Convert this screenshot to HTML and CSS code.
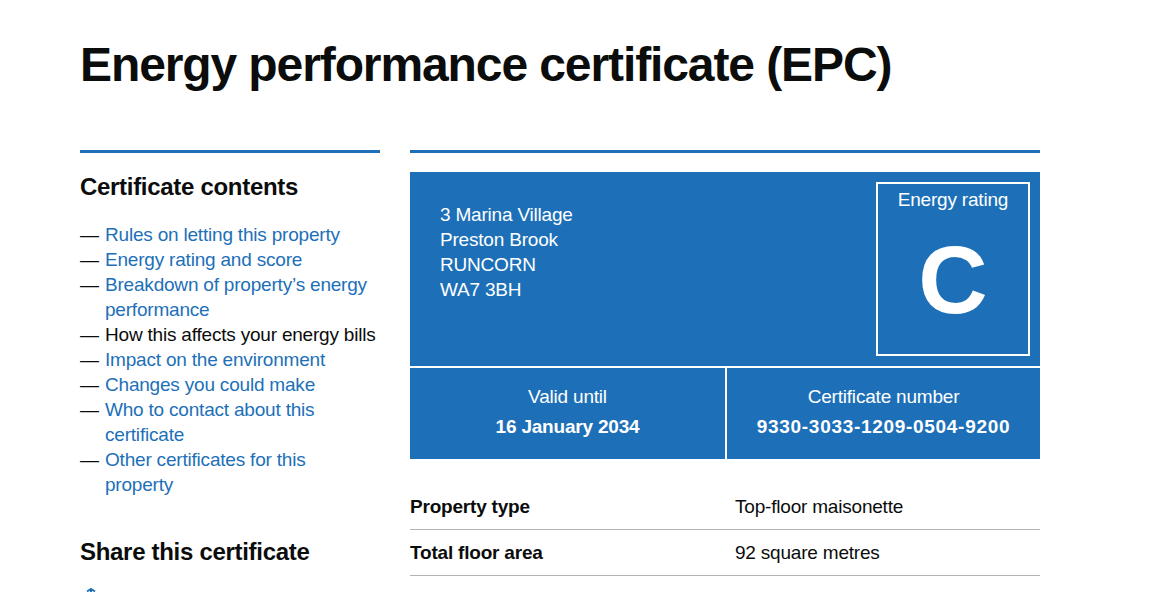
FILE: index.html
```html
<!DOCTYPE html>
<html lang="en">
<head>
<meta charset="utf-8">
<title>Energy performance certificate (EPC)</title>
<link rel="stylesheet" href="styles.css">
</head>
<body>
<main class="page">
  <h1 class="title">Energy performance certificate (EPC)</h1>
  <div class="layout">
    <aside class="sidebar">
      <h2 class="side-heading">Certificate contents</h2>
      <ul class="contents">
        <li><a href="#">Rules on letting this property</a></li>
        <li><a href="#">Energy rating and score</a></li>
        <li><a href="#">Breakdown of property’s energy performance</a></li>
        <li><span class="current">How this affects your energy bills</span></li>
        <li><a href="#">Impact on the environment</a></li>
        <li><a href="#">Changes you could make</a></li>
        <li><a href="#">Who to contact about this certificate</a></li>
        <li><a href="#">Other certificates for this property</a></li>
      </ul>
      <h2 class="side-heading share-heading">Share this certificate</h2>
      <a class="share-link" href="#">
        <svg width="14" height="14" viewBox="0 0 14 14" aria-hidden="true"><path d="M3 3.5 L7 1 L11 3.5" fill="none" stroke="#1d70b8" stroke-width="2"/><rect x="6" y="1.5" width="2" height="10" fill="#1d70b8"/></svg>
      </a>
    </aside>
    <section class="main">
      <div class="epc">
        <div class="epc-top">
          <p class="address">3 Marina Village<br>Preston Brook<br>RUNCORN<br>WA7 3BH</p>
          <div class="rating">
            <span class="rating-label">Energy rating</span>
            <span class="rating-letter">C</span>
          </div>
        </div>
        <div class="epc-bottom">
          <div class="epc-cell">
            <span class="cell-label">Valid until</span>
            <strong class="cell-value">16 January 2034</strong>
          </div>
          <div class="epc-cell">
            <span class="cell-label">Certificate number</span>
            <strong class="cell-value cert-number">9330-3033-1209-0504-9200</strong>
          </div>
        </div>
      </div>
      <dl class="summary">
        <div class="summary-row">
          <dt>Property type</dt>
          <dd>Top-floor maisonette</dd>
        </div>
        <div class="summary-row">
          <dt>Total floor area</dt>
          <dd>92 square metres</dd>
        </div>
      </dl>
    </section>
  </div>
</main>
</body>
</html>
```
FILE: styles.css
```css
* { box-sizing: border-box; }
html, body {
  margin: 0;
  padding: 0;
  background: #ffffff;
}
body {
  font-family: "Liberation Sans", Arial, sans-serif;
  color: #0b0c0c;
  font-size: 19px;
  line-height: 25px;
  letter-spacing: -0.2px;
}
.page {
  padding: 40px 0 0 80px;
  width: 1040px;
}
.title {
  margin: 0;
  font-size: 48px;
  line-height: 50px;
  font-weight: 700;
  letter-spacing: -1.1px;
}
.layout {
  display: flex;
  gap: 30px;
  margin-top: 60px;
}
.sidebar {
  width: 300px;
  flex: none;
  border-top: 3px solid #1d70b8;
  padding-top: 19px;
}
.side-heading {
  margin: 0;
  font-size: 24px;
  line-height: 30px;
  font-weight: 700;
  letter-spacing: -0.3px;
}
.contents {
  list-style: none;
  margin: 20px 0 0;
  padding: 0 3px 0 25px;
}
.contents li::before {
  content: "—";
  display: inline-block;
  width: 25px;
  margin-left: -25px;
  color: #0b0c0c;
}
.contents a {
  color: #1d70b8;
  text-decoration: none;
}
.contents .current { color: #0b0c0c; }
.share-heading { margin-top: 40px; }
.share-link {
  display: block;
  margin: 21px 0 0 4px;
  height: 14px;
}
.share-link svg { display: block; }
.main {
  width: 630px;
  flex: none;
  border-top: 3px solid #1d70b8;
  padding-top: 19px;
}
.epc {
  color: #ffffff;
}
.epc-top {
  display: flex;
  justify-content: space-between;
  background: #1d70b8;
  height: 194px;
  padding: 10px;
}
.address {
  margin: 20px 0 0 20px;
}
.rating {
  width: 154px;
  height: 174px;
  border: 2px solid #ffffff;
  display: flex;
  flex-direction: column;
  align-items: center;
  padding-top: 3px;
}
.rating-letter {
  font-size: 96px;
  line-height: 96px;
  font-weight: 700;
  letter-spacing: 0;
  margin-top: 20px;
}
.epc-bottom {
  display: flex;
  gap: 2px;
  margin-top: 2px;
}
.epc-cell {
  flex: 1;
  background: #1d70b8;
  display: flex;
  flex-direction: column;
  align-items: center;
  padding: 16px 10px 20px;
}
.epc-cell:first-child { flex: 0 0 315px; }
.cell-value {
  margin-top: 5px;
  font-weight: 700;
}
.cert-number { letter-spacing: 0.7px; }
.summary {
  margin: 25px 0 0;
}
.summary-row {
  display: flex;
  border-bottom: 1px solid #b1b4b6;
  padding: 10px 0;
}
.summary-row dt {
  width: 325px;
  flex: none;
  font-weight: 700;
}
.summary-row dd {
  margin: 0;
}
```
